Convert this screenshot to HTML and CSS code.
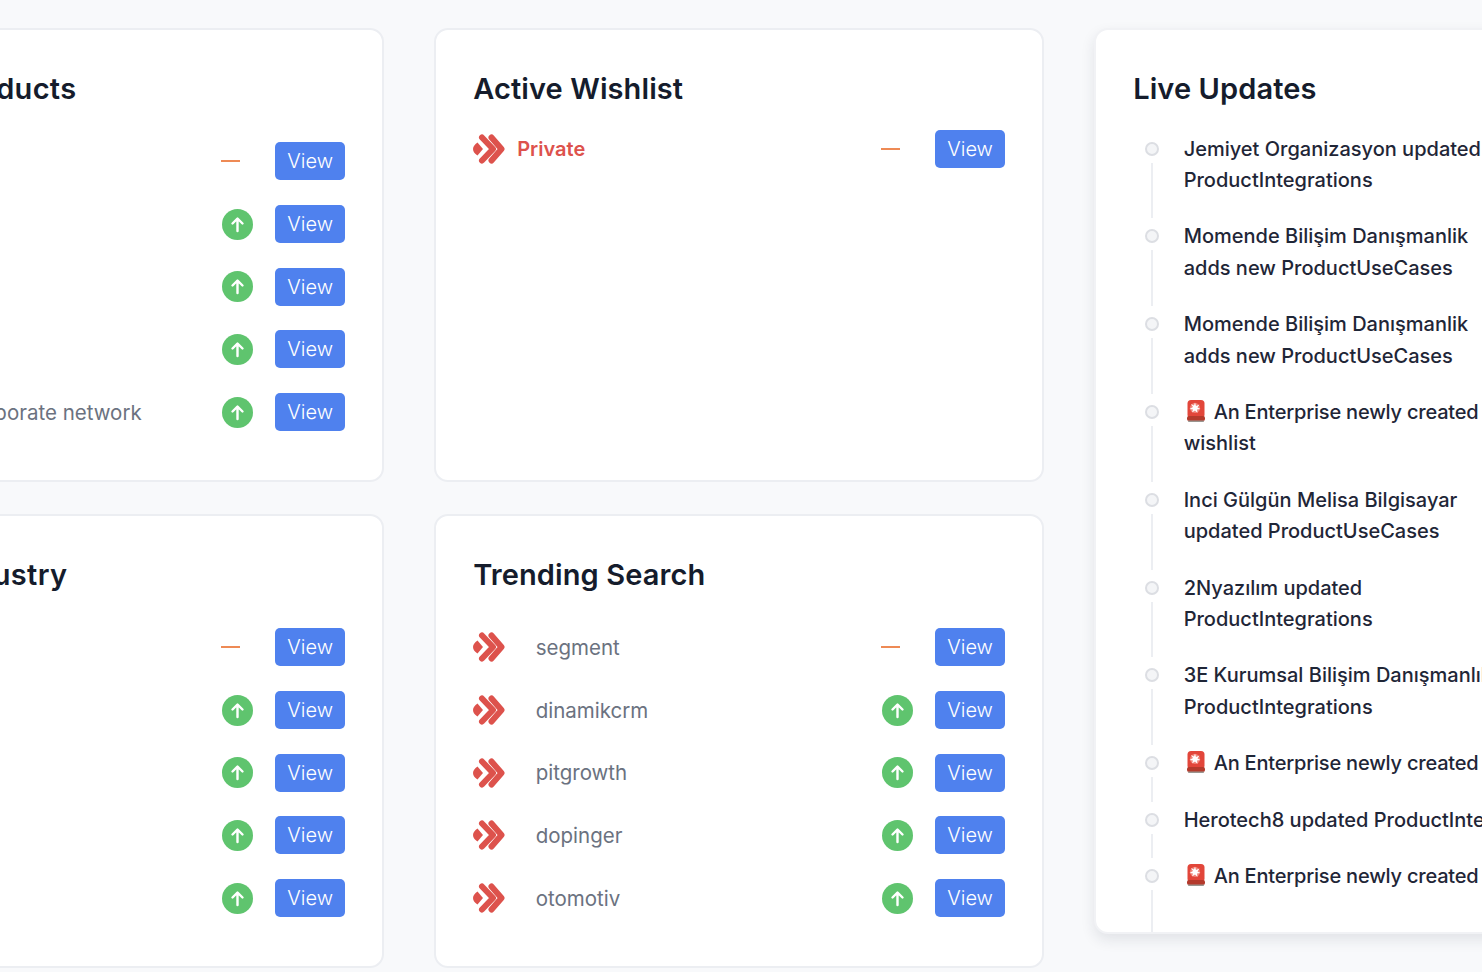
FILE: index.html
```html
<!DOCTYPE html>
<html lang="en">
<head>
    <meta charset="UTF-8">
    <title>Dashboard</title>
    <link rel="stylesheet" href="styles.css">
</head>
<body>
    <svg class="defs" width="0" height="0">
        <symbol id="chevrons" viewBox="0 0 32 32">
            <path d="M4.500 9.500 L10 16 L4.500 22.500 Q0 19.500 0 16 Q0 12.500 4.500 9.500Z" fill="#dd524c"/>
            <path d="M9 4.500 L20 16 L9 27.500" fill="none" stroke="#dd524c" stroke-width="6" stroke-linecap="round" stroke-linejoin="round"/>
            <path d="M18.500 4.500 L28.500 16 L18.500 27.500" fill="none" stroke="#dd524c" stroke-width="6" stroke-linecap="round" stroke-linejoin="round"/>
        </symbol>
        <symbol id="arrow-up" viewBox="0 0 31 31">
            <circle cx="15.5" cy="15.5" r="15.5" fill="#5fc46e"/>
            <path d="M15.5 22 V10 M10.5 14.5 L15.5 9.5 L20.5 14.5" fill="none" stroke="#fff" stroke-width="2.4" stroke-linecap="round" stroke-linejoin="round"/>
        </symbol>
        <symbol id="siren" viewBox="0 0 18 22">
            <rect x="0.500" y="0" width="17" height="18" rx="3.500" fill="#e2463a"/>
            <circle cx="8" cy="8" r="5" fill="#f0857a"/>
            <path d="M8 2.500 L9 6 L12.500 4.500 L10.500 7.500 L13.500 9 L10 9.500 L10.500 13 L8 10.500 L5 12.500 L6 9.500 L2.500 9 L6 7 L4 4 L7 5.500Z" fill="#fff"/>
            <rect x="0" y="16" width="18" height="5" rx="2" fill="#b43a2c"/>
            <rect x="1" y="20.500" width="16" height="1.500" rx="0.750" fill="#9a9690"/>
        </symbol>
    </svg>

    <div class="dashboard">
        <!-- Trending Products -->
        <section class="card">
            <h2 class="card-title title-products">Trending Products</h2>
            <div class="row">
                <svg class="chevrons"><use href="#chevrons"/></svg>
                <span class="row-name">cloud</span>
                <span class="dash"></span>
                <a class="view-btn" href="#">View</a>
            </div>
            <div class="row">
                <svg class="chevrons"><use href="#chevrons"/></svg>
                <span class="row-name">erp</span>
                <svg class="trend"><use href="#arrow-up"/></svg>
                <a class="view-btn" href="#">View</a>
            </div>
            <div class="row">
                <svg class="chevrons"><use href="#chevrons"/></svg>
                <span class="row-name">crm</span>
                <svg class="trend"><use href="#arrow-up"/></svg>
                <a class="view-btn" href="#">View</a>
            </div>
            <div class="row">
                <svg class="chevrons"><use href="#chevrons"/></svg>
                <span class="row-name">vpn</span>
                <svg class="trend"><use href="#arrow-up"/></svg>
                <a class="view-btn" href="#">View</a>
            </div>
            <div class="row">
                <svg class="chevrons"><use href="#chevrons"/></svg>
                <span class="row-name">Secured corporate network</span>
                <svg class="trend"><use href="#arrow-up"/></svg>
                <a class="view-btn" href="#">View</a>
            </div>
        </section>

        <!-- Active Wishlist -->
        <section class="card card-wishlist">
            <h2 class="card-title">Active Wishlist</h2>
            <div class="row">
                <svg class="chevrons"><use href="#chevrons"/></svg>
                <span class="row-name row-name-private">Private</span>
                <span class="dash"></span>
                <a class="view-btn" href="#">View</a>
            </div>
        </section>

        <!-- Live Updates -->
        <section class="card card-live">
            <h2 class="card-title">Live Updates</h2>
            <ul class="timeline">
                <li class="timeline-item">
                    <div class="timeline-mark"><span class="dot"></span><span class="line"></span></div>
                    <p>Jemiyet Organizasyon updated<br>ProductIntegrations</p>
                </li>
                <li class="timeline-item">
                    <div class="timeline-mark"><span class="dot"></span><span class="line"></span></div>
                    <p>Momende Bilişim Danışmanlik<br>adds new ProductUseCases</p>
                </li>
                <li class="timeline-item">
                    <div class="timeline-mark"><span class="dot"></span><span class="line"></span></div>
                    <p>Momende Bilişim Danışmanlik<br>adds new ProductUseCases</p>
                </li>
                <li class="timeline-item">
                    <div class="timeline-mark"><span class="dot"></span><span class="line"></span></div>
                    <p><svg class="siren"><use href="#siren"/></svg><span class="alert-text">An Enterprise newly created</span><br>wishlist</p>
                </li>
                <li class="timeline-item">
                    <div class="timeline-mark"><span class="dot"></span><span class="line"></span></div>
                    <p>Inci Gülgün Melisa Bilgisayar<br>updated ProductUseCases</p>
                </li>
                <li class="timeline-item">
                    <div class="timeline-mark"><span class="dot"></span><span class="line"></span></div>
                    <p>2Nyazılım updated<br>ProductIntegrations</p>
                </li>
                <li class="timeline-item">
                    <div class="timeline-mark"><span class="dot"></span><span class="line"></span></div>
                    <p>3E Kurumsal Bilişim Danışmanlık<br>ProductIntegrations</p>
                </li>
                <li class="timeline-item">
                    <div class="timeline-mark"><span class="dot"></span><span class="line"></span></div>
                    <p><svg class="siren"><use href="#siren"/></svg><span class="alert-text">An Enterprise newly created</span></p>
                </li>
                <li class="timeline-item">
                    <div class="timeline-mark"><span class="dot"></span><span class="line"></span></div>
                    <p>Herotech8 updated ProductIntegrations</p>
                </li>
                <li class="timeline-item timeline-item-last">
                    <div class="timeline-mark"><span class="dot"></span><span class="line"></span></div>
                    <p><svg class="siren"><use href="#siren"/></svg><span class="alert-text">An Enterprise newly created</span></p>
                </li>
            </ul>
        </section>

        <!-- Trending Industry -->
        <section class="card">
            <h2 class="card-title title-industry">Trending Industry</h2>
            <div class="row">
                <svg class="chevrons"><use href="#chevrons"/></svg>
                <span class="row-name">saas</span>
                <span class="dash"></span>
                <a class="view-btn" href="#">View</a>
            </div>
            <div class="row">
                <svg class="chevrons"><use href="#chevrons"/></svg>
                <span class="row-name">retail</span>
                <svg class="trend"><use href="#arrow-up"/></svg>
                <a class="view-btn" href="#">View</a>
            </div>
            <div class="row">
                <svg class="chevrons"><use href="#chevrons"/></svg>
                <span class="row-name">media</span>
                <svg class="trend"><use href="#arrow-up"/></svg>
                <a class="view-btn" href="#">View</a>
            </div>
            <div class="row">
                <svg class="chevrons"><use href="#chevrons"/></svg>
                <span class="row-name">banking</span>
                <svg class="trend"><use href="#arrow-up"/></svg>
                <a class="view-btn" href="#">View</a>
            </div>
            <div class="row">
                <svg class="chevrons"><use href="#chevrons"/></svg>
                <span class="row-name">energy</span>
                <svg class="trend"><use href="#arrow-up"/></svg>
                <a class="view-btn" href="#">View</a>
            </div>
        </section>

        <!-- Trending Search -->
        <section class="card">
            <h2 class="card-title">Trending Search</h2>
            <div class="row">
                <svg class="chevrons"><use href="#chevrons"/></svg>
                <span class="row-name">segment</span>
                <span class="dash"></span>
                <a class="view-btn" href="#">View</a>
            </div>
            <div class="row">
                <svg class="chevrons"><use href="#chevrons"/></svg>
                <span class="row-name">dinamikcrm</span>
                <svg class="trend"><use href="#arrow-up"/></svg>
                <a class="view-btn" href="#">View</a>
            </div>
            <div class="row">
                <svg class="chevrons"><use href="#chevrons"/></svg>
                <span class="row-name">pitgrowth</span>
                <svg class="trend"><use href="#arrow-up"/></svg>
                <a class="view-btn" href="#">View</a>
            </div>
            <div class="row">
                <svg class="chevrons"><use href="#chevrons"/></svg>
                <span class="row-name">dopinger</span>
                <svg class="trend"><use href="#arrow-up"/></svg>
                <a class="view-btn" href="#">View</a>
            </div>
            <div class="row">
                <svg class="chevrons"><use href="#chevrons"/></svg>
                <span class="row-name">otomotiv</span>
                <svg class="trend"><use href="#arrow-up"/></svg>
                <a class="view-btn" href="#">View</a>
            </div>
        </section>
    </div>
</body>
</html>
```

FILE: styles.css
```css
/* General Styling */
* {
    margin: 0;
    padding: 0;
    box-sizing: border-box;
    font-family: 'Inter', 'Liberation Sans', sans-serif;
}

html, body {
    height: 100%;
    overflow: hidden;
}

body {
    background-color: #f8f9fb;
}

.defs {
    display: block;
    height: 0;
}

/* Grid runs past both sides of the window */
.dashboard {
    display: grid;
    grid-template-columns: 609.6px 609.6px 609.6px;
    grid-template-rows: 454px 454px;
    column-gap: 50.4px;
    row-gap: 32px;
    width: 1930px;
    margin-left: -225.8px;
    padding-top: 28px;
}

/* Cards */
.card {
    background-color: #fff;
    border: 2px solid #eceef2;
    border-radius: 14px;
    padding: 38px 37px 0;
}

.card-live {
    grid-column: 3;
    grid-row: 1 / 3;
    align-self: start;
    height: 906px;
    overflow: hidden;
    border-color: #f1f2f5;
    box-shadow: 0 6px 14px rgba(30, 40, 60, 0.1);
}

.card-title {
    font-size: 29px;
    line-height: 42px;
    font-weight: 600;
    letter-spacing: 0.1px;
    color: #151c2c;
    margin-bottom: 32.4px;
    white-space: nowrap;
}

.card-wishlist .card-title {
    margin-bottom: 20px;
}

.card-live .card-title {
    margin-bottom: 23.5px;
}

.title-products {
    letter-spacing: 0.3px;
}

.title-industry {
    letter-spacing: 0.3px;
}

/* Rows */
.row {
    display: flex;
    align-items: center;
    height: 38px;
    margin-bottom: 24.7px;
}

.chevrons {
    width: 32px;
    height: 32px;
    flex: none;
}

.row-name {
    flex: 1;
    margin-left: 30.5px;
    font-size: 20.5px;
    color: #6b7280;
    white-space: nowrap;
}

.row-name-private {
    margin-left: 12px;
    font-size: 20px;
    font-weight: 600;
    color: #dd524c;
}

.trend {
    width: 31px;
    height: 31px;
    flex: none;
    margin-right: 22.4px;
}

.dash {
    width: 19px;
    height: 2px;
    flex: none;
    margin-left: -1px;
    margin-right: 35.5px;
    background-color: #ee8a55;
}

.view-btn {
    width: 69.4px;
    height: 38px;
    flex: none;
    display: flex;
    align-items: center;
    justify-content: center;
    background-color: #4f81ee;
    border-radius: 5px;
    color: #fff;
    font-size: 20px;
    font-weight: 300;
    text-decoration: none;
}

/* Live updates timeline */
.timeline {
    list-style: none;
}

.timeline-item {
    display: flex;
    padding-bottom: 25px;
}

.timeline-item-last {
    min-height: 76px;
    padding-bottom: 0;
}

.timeline-mark {
    display: flex;
    flex-direction: column;
    align-items: center;
    width: 14px;
    flex: none;
    margin: 8px 24.5px 0 12px;
}

.dot {
    width: 14px;
    height: 14px;
    flex: none;
    border: 2px solid #dcdee3;
    border-radius: 50%;
    background-color: #f4f5f7;
}

.line {
    width: 2px;
    flex: 1;
    margin-top: 7px;
    margin-bottom: -22px;
    background-color: #eceef2;
}

.timeline-item p {
    font-size: 20px;
    line-height: 31.4px;
    font-weight: 500;
    color: #1f2637;
    white-space: nowrap;
}

.alert-text {
    letter-spacing: -0.2px;
}

.siren {
    width: 18px;
    height: 22px;
    margin: 0 9px 0 3px;
    vertical-align: -3px;
}
```
